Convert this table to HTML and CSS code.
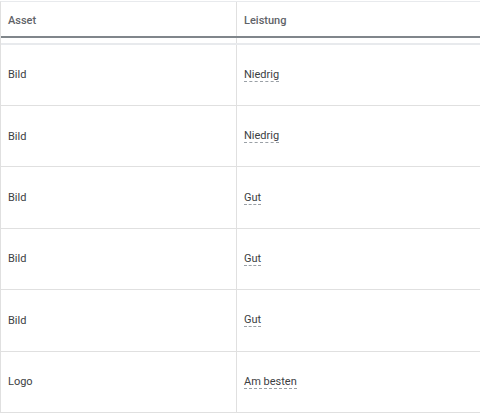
FILE: index.html
```html
<!DOCTYPE html>
<html lang="de">
<head>
<meta charset="utf-8">
<link rel="stylesheet" href="styles.css">
</head>
<body>
<div class="table">
  <div class="head">
    <div class="cell hcell">Asset</div>
    <div class="cell hcell">Leistung</div>
  </div>
  <div class="gap"><div class="gcell"></div><div class="gcell"></div></div>
  <div class="row"><div class="cell">Bild</div><div class="cell"><span class="perf">Niedrig</span></div></div>
  <div class="row"><div class="cell">Bild</div><div class="cell"><span class="perf">Niedrig</span></div></div>
  <div class="row"><div class="cell">Bild</div><div class="cell"><span class="perf">Gut</span></div></div>
  <div class="row"><div class="cell">Bild</div><div class="cell"><span class="perf">Gut</span></div></div>
  <div class="row"><div class="cell">Bild</div><div class="cell"><span class="perf">Gut</span></div></div>
  <div class="row"><div class="cell">Logo</div><div class="cell"><span class="perf">Am besten</span></div></div>
</div>
</body>
</html>
```
FILE: styles.css
```css
html, body {
  margin: 0;
  padding: 0;
  background: #ffffff;
}
body {
  padding-top: 1px;
  font-family: Roboto, "Noto Sans", Arial, sans-serif;
  font-size: 11px;
  color: #3c4043;
}
.table {
  width: 480px;
  border-top: 1px solid #e8eaed;
  border-left: 1px solid #e0e0e0;
  box-sizing: border-box;
}
.head, .row, .gap {
  display: grid;
  grid-template-columns: 236px 1fr;
}
.head {
  height: 34px;
  border-bottom: 2px solid #80868b;
}
.gap {
  height: 4.6px;
  border-bottom: 2px solid #e8eaed;
}
.gcell:first-child {
  border-right: 1px solid #e0e0e0;
}
.cell {
  display: flex;
  align-items: center;
  padding-left: 7px;
}
.cell:first-child {
  border-right: 1px solid #e0e0e0;
}
.hcell {
  font-weight: 500;
  color: #5f6368;
  padding-top: 2px;
}
.row {
  height: 61.4px;
  box-sizing: border-box;
  border-bottom: 1px solid #e0e0e0;
}
.perf {
  border-bottom: 1px dashed #9aa0a6;
  line-height: 13px;
}
```
